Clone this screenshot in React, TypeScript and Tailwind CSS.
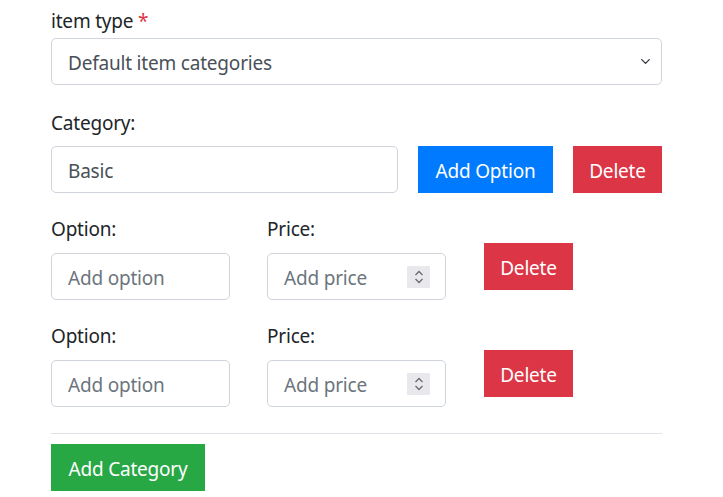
import { ChevronDown } from 'lucide-react';

const font = { fontFamily: '"Noto Sans", "Open Sans", sans-serif' };

const Spinner = () => (
  <div className="w-[23px] h-[22px] bg-[#e9e9ed] flex items-center justify-center">
    <svg width="12" height="18" viewBox="0 0 12 18" fill="none" stroke="#6b6b6b" strokeWidth="1.3">
      <path d="M2.5 7 L6 3.5 L9.5 7" />
      <path d="M2.5 11 L6 14.5 L9.5 11" />
    </svg>
  </div>
);

const OptionRow = () => (
  <div className="flex items-start mt-[21px]">
    <div className="w-[179px]">
      <div className="leading-[30px] text-[#212529] mb-[9px]">Option:</div>
      <input
        placeholder="Add option"
        className="w-[179px] h-[47px] border border-[#ced4da] rounded-[5px] px-4 pt-[3px] text-[19px] tracking-[-0.2px] text-[#495057] placeholder:text-[#6c757d] outline-none"
      />
    </div>
    <div className="w-[179px] ml-[37px]">
      <div className="leading-[30px] text-[#212529] mb-[9px]">Price:</div>
      <div className="w-[179px] h-[47px] border border-[#ced4da] rounded-[5px] pl-4 pr-[15px] flex items-center justify-between">
        <span className="text-[#6c757d] pt-[3px]">Add price</span>
        <Spinner />
      </div>
    </div>
    <button className="ml-[38px] mt-[29px] w-[89px] h-[47px] pt-[3px] bg-[#dc3545] text-white">Delete</button>
  </div>
);

const App = () => {
  return (
    <div className="bg-white w-[723px] h-[497px] overflow-hidden text-[19px] tracking-[-0.2px]" style={font}>
      <div className="ml-[51px] w-[611px] pt-[6px]">
        <div className="leading-[30px] text-[#212529] mb-[2px]">
          item type <span className="text-[#dc3545]">*</span>
        </div>
        <div className="h-[47px] border border-[#ced4da] rounded-[5px] pl-4 pr-[8px] flex items-center justify-between text-[#495057]">
          <span className="pt-[3px]">Default item categories</span>
          <ChevronDown size={15} strokeWidth={2.2} color="#343a40" />
        </div>

        <div className="leading-[30px] text-[#212529] mt-[23px] mb-[8px]">Category:</div>
        <div className="flex items-center">
          <div className="w-[347px] h-[47px] border border-[#ced4da] rounded-[5px] px-4 pt-[3px] flex items-center text-[#495057]">
            Basic
          </div>
          <button className="ml-[20px] w-[135px] h-[47px] pt-[3px] bg-[#007bff] text-white">Add Option</button>
          <button className="ml-[20px] w-[89px] h-[47px] pt-[3px] bg-[#dc3545] text-white">Delete</button>
        </div>

        <OptionRow />
        <OptionRow />

        <div className="mt-[26px] border-t border-[#dee2e6]" />
        <button className="mt-[10px] w-[154px] h-[47px] pt-[3px] bg-[#28a745] text-white">Add Category</button>
      </div>
    </div>
  );
};

export default App;
